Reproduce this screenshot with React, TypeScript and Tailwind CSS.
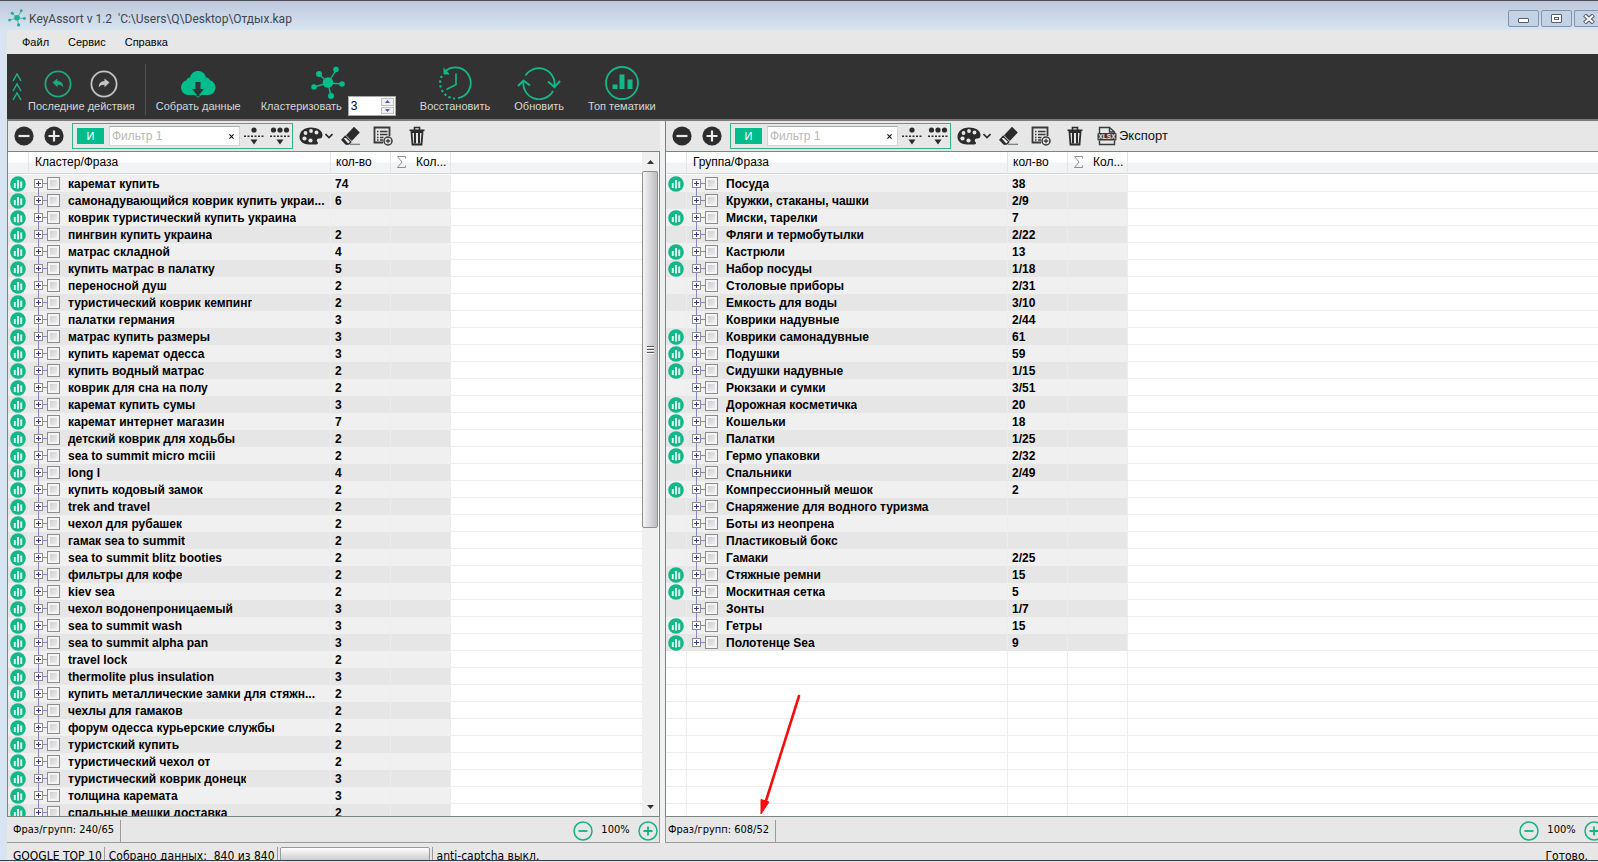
import { useState } from "react";
import type { ReactNode } from "react";
import { clsx } from "clsx";

type Row = { name: string; count: string; chart: boolean };

const clusters: Row[] = [
	["каремат купить", "74"],
	["самонадувающийся коврик купить украи...", "6"],
	["коврик туристический купить украина", ""],
	["пингвин купить украина", "2"],
	["матрас складной", "4"],
	["купить матрас в палатку", "5"],
	["переносной душ", "2"],
	["туристический коврик кемпинг", "2"],
	["палатки германия", "3"],
	["матрас купить размеры", "3"],
	["купить каремат одесса", "3"],
	["купить водный матрас", "2"],
	["коврик для сна на полу", "2"],
	["каремат купить сумы", "3"],
	["каремат интернет магазин", "7"],
	["детский коврик для ходьбы", "2"],
	["sea to summit micro mciii", "2"],
	["long l", "4"],
	["купить кодовый замок", "2"],
	["trek and travel", "2"],
	["чехол для рубашек", "2"],
	["гамак sea to summit", "2"],
	["sea to summit blitz booties", "2"],
	["фильтры для кофе", "2"],
	["kiev sea", "2"],
	["чехол водонепроницаемый", "3"],
	["sea to summit wash", "3"],
	["sea to summit alpha pan", "3"],
	["travel lock", "2"],
	["thermolite plus insulation", "3"],
	["купить металлические замки для стяжн...", "2"],
	["чехлы для гамаков", "2"],
	["форум одесса курьерские службы", "2"],
	["туристский купить", "2"],
	["туристический чехол от", "2"],
	["туристический коврик донецк", "3"],
	["толщина каремата", "3"],
	["спальные мешки доставка", "2"],
].map(([name, count]) => ({ name, count, chart: true }));

const groups: Row[] = [
	{ name: "Посуда", count: "38", chart: true },
	{ name: "Кружки, стаканы, чашки", count: "2/9", chart: false },
	{ name: "Миски, тарелки", count: "7", chart: true },
	{ name: "Фляги и термобутылки", count: "2/22", chart: false },
	{ name: "Кастрюли", count: "13", chart: true },
	{ name: "Набор посуды", count: "1/18", chart: true },
	{ name: "Столовые приборы", count: "2/31", chart: false },
	{ name: "Емкость для воды", count: "3/10", chart: false },
	{ name: "Коврики надувные", count: "2/44", chart: false },
	{ name: "Коврики самонадувные", count: "61", chart: true },
	{ name: "Подушки", count: "59", chart: true },
	{ name: "Сидушки надувные", count: "1/15", chart: true },
	{ name: "Рюкзаки и сумки", count: "3/51", chart: false },
	{ name: "Дорожная косметичка", count: "20", chart: true },
	{ name: "Кошельки", count: "18", chart: true },
	{ name: "Палатки", count: "1/25", chart: true },
	{ name: "Гермо упаковки", count: "2/32", chart: true },
	{ name: "Спальники", count: "2/49", chart: false },
	{ name: "Компрессионный мешок", count: "2", chart: true },
	{ name: "Снаряжение для водного туризма", count: "", chart: false },
	{ name: "Боты из неопрена", count: "", chart: false },
	{ name: "Пластиковый бокс", count: "", chart: false },
	{ name: "Гамаки", count: "2/25", chart: false },
	{ name: "Стяжные ремни", count: "15", chart: true },
	{ name: "Москитная сетка", count: "5", chart: true },
	{ name: "Зонты", count: "1/7", chart: false },
	{ name: "Гетры", count: "15", chart: true },
	{ name: "Полотенце Sea", count: "9", chart: true },
];

const emptyRows = Array.from({ length: 10 }, (_, i) => i);

function ClusterIcon({ className }: { className?: string }) {
	return (
		<svg viewBox="0 0 34 34" className={className} fill="currentColor" stroke="currentColor">
			<path d="M17 17 8 8M17 17l8-13M17 17l14 1M17 17 3 21M17 17l3 13" strokeWidth="1.4" />
			<g stroke="none">
				<circle cx="17" cy="16.500" r="5.300" />
				<circle cx="8" cy="8" r="3" />
				<circle cx="25" cy="3.500" r="2.800" />
				<circle cx="31" cy="18" r="2.800" />
				<circle cx="3" cy="21" r="2.800" />
				<circle cx="20" cy="30" r="3" />
			</g>
		</svg>
	);
}

function ArrowCircle({ flip }: { flip?: boolean }) {
	return (
		<svg viewBox="0 0 28 28" className="size-7" fill="none" stroke="currentColor">
			<circle cx="14" cy="14" r="12.600" strokeWidth="1.800" />
			<path
				d="M8.500 12.500 13.500 8.500v2.600c3.700.2 5.600 2.400 5.800 6.200-1.400-1.900-3-2.600-5.800-2.600v2.600z"
				fill="currentColor"
				stroke="none"
				transform={flip ? "matrix(-1 0 0 1 28 0)" : undefined}
			/>
		</svg>
	);
}

function CloudIcon() {
	return (
		<svg viewBox="0 0 36 28" className="h-7 w-9">
			<path
				d="M8 25a7.500 7.500 0 0 1-1.500-14.700C7 8.500 8.500 7.600 10 7.600 11 3.400 14 1 18 1s7 2.400 8 6.400c2 0 3.400 1 4 2.900A7.500 7.500 0 0 1 28.500 25z"
				fill="#00bd8b"
			/>
			<path d="M15.500 12h5v7h3.300L18 26.500 12.200 19h3.300z" fill="#323232" />
			<path d="M13.500 23.500 18 27.300l4.500-3.800" fill="none" stroke="#00bd8b" strokeWidth="1" />
		</svg>
	);
}

function RestoreIcon() {
	return (
		<svg viewBox="0 0 34 34" className="size-[34px]" fill="none" stroke="currentColor" strokeWidth="1.800">
			<path d="M8 4.500A15.500 15.500 0 1 1 20 32.200" />
			<path d="M3.800 10A15.500 15.500 0 0 0 17 32.500" strokeDasharray="2.200 2.600" strokeWidth="2.200" />
			<path d="M6 2.500v5.500h5z" fill="currentColor" strokeWidth="1" />
			<path d="M18 7.500v11L8.500 23.500" strokeWidth="1.600" />
		</svg>
	);
}

function RefreshIcon() {
	return (
		<svg viewBox="0 0 44 34" className="h-[34px] w-11" fill="none" stroke="currentColor" strokeWidth="1.800">
			<path d="M8.500 9.500A15.800 15.800 0 0 1 37.500 20" />
			<path d="M36 25A15.800 15.800 0 0 1 6.500 15" />
			<path d="m1 20 5.500-5.500L13 19.500M31 15.500l6.500 5.500L43 15" strokeWidth="2" />
		</svg>
	);
}

function TopIcon() {
	return (
		<svg viewBox="0 0 34 34" className="size-[34px]" fill="currentColor">
			<circle cx="17" cy="17" r="16" fill="none" stroke="currentColor" strokeWidth="1.800" />
			<path d="M7.500 18.500h5V23h-5zM14.500 8.500h5V23h-5zM22.500 13.500h5V23h-5z" />
		</svg>
	);
}

function ChartBadge() {
	return (
		<svg viewBox="0 0 16 16" className="block size-4">
			<circle cx="8" cy="8" r="7.800" fill="#14b78a" />
			<path d="M3.800 7h2v5h-2zM7 4h2v8.500H7zM10.200 5.500h2V12h-2z" fill="#d9f5ec" />
		</svg>
	);
}

function RoundSign({ plus }: { plus?: boolean }) {
	return (
		<svg viewBox="0 0 20 20" className="size-5">
			<circle cx="10" cy="10" r="9.600" fill="#2d2d2d" />
			<path d={plus ? "M4.500 10h11M10 4.500v11" : "M4.500 10h11"} stroke="#e9e9e9" strokeWidth="2.200" />
		</svg>
	);
}

function ZoomSign({ plus }: { plus?: boolean }) {
	return (
		<svg viewBox="0 0 20 20" className="size-5" fill="none" stroke="#12b486">
			<circle cx="10" cy="10" r="9" strokeWidth="1.500" />
			<path d={plus ? "M5.500 10h9M10 5.500v9" : "M5.500 10h9"} strokeWidth="1.800" />
		</svg>
	);
}

function CollapseDots({ many }: { many?: boolean }) {
	return (
		<svg viewBox="0 0 20 20" className="size-5" fill="#2b2b2b">
			<circle cx="10" cy="4" r="2.600" />
			{many && <circle cx="3.500" cy="4" r="2.600" />}
			{many && <circle cx="16.500" cy="4" r="2.600" />}
			<path d="M0 9.500h2v1.500H0zM3.500 9.500h2v1.500h-2zM7 9.500h2v1.500H7zM10.500 9.500h2v1.500h-2zM14 9.500h2v1.500h-2zM17.500 9.500h2v1.500h-2zM6.500 13.500h7L10 18.500z" />
		</svg>
	);
}

function Palette() {
	return (
		<svg viewBox="0 0 24 20" className="h-5 w-6">
			<path
				d="M12 1.500C5 1.500.5 5.500.5 11c0 4.500 4 7.500 9.500 7.500h7c2 0 2.500-1.500 1.500-2.500-1.500-1.500-.5-3.500 1.500-3.500 2 .3 3.500-.7 3.500-3.500 0-4.500-5-7.500-11.500-7.500z"
				fill="#2b2b2b"
			/>
			<g fill="#e8e8e8">
				<circle cx="5.500" cy="12.500" r="2.100" />
				<circle cx="6.500" cy="7" r="1.900" />
				<circle cx="12" cy="5" r="1.900" />
				<circle cx="17.500" cy="6.500" r="1.900" />
				<circle cx="11.500" cy="14.500" r="2.100" />
			</g>
		</svg>
	);
}

function Eraser() {
	return (
		<svg viewBox="0 0 20 20" className="size-5">
			<path d="m13 .8 5.800 5.700-8 8.500L5 9.200z" fill="#2b2b2b" />
			<path d="m4.200 10.200 5.600 5.700-2 2.100H5L1 14z" fill="#e8e8e8" stroke="#2b2b2b" strokeWidth="1.300" />
			<path d="M.5 13.500 5 18.500l2.500-.5-5-6z" fill="#2b2b2b" />
			<path d="M9 18.300h10" stroke="#777" strokeWidth="1.200" />
		</svg>
	);
}

function ListAdd() {
	return (
		<svg viewBox="0 0 20 20" className="size-5" fill="none" stroke="#3a3a3a">
			<path d="M10 16.500H1.500v-15h15V10" strokeWidth="1.800" />
			<path d="M4 5.500h1.500M7 5.500h7.500M4 8.500h1.500M7 8.500h7.500M4 11.500h1.500M7 11.500h3.500M4 14h1.500M7 14h3" strokeWidth="1.300" />
			<circle cx="15" cy="15" r="4" strokeWidth="1.500" fill="#e8e8e8" />
			<path d="M12.800 15h4.400M15 12.800v4.400" strokeWidth="1.300" />
		</svg>
	);
}

function Trash() {
	return (
		<svg viewBox="0 0 16 20" className="h-5 w-4" fill="none" stroke="#2b2b2b">
			<path d="M.5 4.200h15M5.500 3.500V1.500h5v2" strokeWidth="1.600" />
			<path d="M2.500 6 3.500 18.500h9L13.500 6z" strokeWidth="1.800" />
			<path d="M6 6.500v11M10 6.500v11" strokeWidth="2" />
		</svg>
	);
}

function Xlsx() {
	return (
		<svg viewBox="0 0 20 20" className="size-5" fill="none" stroke="#3a3a3a">
			<path d="M2.500 7V1.500h10l5 4.500v2M12.500 1.500V6h5M2.500 14.500v4h15v-4" strokeWidth="1.400" />
			<rect x=".5" y="7" width="19" height="7.500" rx="1" fill="#3a3a3a" stroke="none" />
			<text x="10" y="13" textAnchor="middle" fontSize="6.500" fontWeight="700" fontFamily="Liberation Sans" fill="#e8e8e8" stroke="none">
				XLSX
			</text>
		</svg>
	);
}

function IconButton({ label, className, children }: { label: string; className?: string; children: ReactNode }) {
	return (
		<button type="button" aria-label={label} className={clsx("flex shrink-0 items-center", className)}>
			{children}
		</button>
	);
}

function Action({ icon, label }: { icon: ReactNode; label: string }) {
	return (
		<button type="button" className="flex flex-col items-center justify-end">
			<span className="text-[#14b78a]">{icon}</span>
			<span className="leading-3">{label}</span>
		</button>
	);
}

function TitleBar() {
	return (
		<header className="flex h-[30px] shrink-0 items-start border-t border-[#4c4a58] bg-linear-to-b from-[#bdc9db] to-[#d7e4f1]">
			<ClusterIcon className="mt-2 ml-2 size-[18px] text-[#27ad90]" />
			<h1 className="mt-2 ml-[3px] font-[Roboto,sans-serif] text-xs leading-5 whitespace-pre text-[#3f4650]">
				{"KeyAssort v 1.2  'C:\\Users\\Q\\Desktop\\Отдых.kap"}
			</h1>
			<div className="mt-[9px] ml-auto flex gap-0.5">
				<button type="button" aria-label="Свернуть" className="flex h-[17px] w-[31px] items-center justify-center rounded-xs border border-[#8393ad] bg-[#c4d2e5]">
					<span className="mt-[3px] h-[5px] w-[11px] rounded-[1px] border border-[#555c6b] bg-white" />
				</button>
				<button type="button" aria-label="Развернуть" className="flex h-[17px] w-[31px] items-center justify-center rounded-xs border border-[#8393ad] bg-[#c4d2e5]">
					<span className="flex h-[9px] w-[11px] items-center justify-center rounded-[1px] border border-[#555c6b] bg-white">
						<span className="h-[3px] w-[5px] border border-[#555c6b]" />
					</span>
				</button>
				<button type="button" aria-label="Закрыть" className="flex h-[17px] w-6 items-center justify-end rounded-l-xs border border-r-0 border-[#8393ad] bg-[#c4d2e5] pr-[3px]">
					<svg viewBox="0 0 12 10" className="h-2.5 w-3">
						<path d="m1.500 1 9 8M10.500 1l-9 8" stroke="#555c6b" strokeWidth="4.200" />
						<path d="m2 1.500 8 7M10 1.500l-8 7" stroke="#fff" strokeWidth="2" />
					</svg>
				</button>
			</div>
		</header>
	);
}

function MainToolbar() {
	const [size, setSize] = useState(3);
	return (
		<div className="flex h-[65px] shrink-0 bg-[#323232] pb-[7px] text-[11px] text-[#d6d6d6]">
			<button type="button" aria-label="Скрыть панель" className="ml-[5px] flex w-3 items-center pt-2">
				<svg viewBox="0 0 10 28" className="h-7 w-2.5" fill="none" stroke="#14b78a" strokeWidth="1.500">
					<path d="m1 8 4-7 4 7M1 18l4-7 4 7M1 27l4-7 4 7" />
				</svg>
			</button>
			<div className="ml-1 flex flex-col items-center justify-end">
				<div className="mb-0.5 flex gap-[18px]">
					<button type="button" aria-label="Отменить" className="text-[#22a782]">
						<ArrowCircle />
					</button>
					<button type="button" aria-label="Повторить" className="text-[#c4c4c4]">
						<ArrowCircle flip />
					</button>
				</div>
				<span className="leading-3">Последние действия</span>
			</div>
			<span className="mt-2.5 ml-2.5 h-[51px] w-px bg-[#505050]" />
			<div className="ml-2.5 flex">
				<Action icon={<div className="mb-0.5"><CloudIcon /></div>} label="Собрать данные" />
			</div>
			<div className="-mb-1 ml-5 flex flex-col items-center justify-end">
				<button type="button" aria-label="Кластеризовать" className="-mb-1 text-[#00bd8b]">
					<ClusterIcon className="size-[34px]" />
				</button>
				<div className="flex h-5 items-center gap-1.5">
					<label htmlFor="cluster-size">Кластеризовать</label>
					<div className="flex h-5 w-12 border border-[#a9a9a9] bg-white">
						<input
							id="cluster-size"
							type="number"
							value={size}
							onChange={(e) => setSize(Number(e.target.value))}
							className="w-8 min-w-0 flex-1 appearance-none bg-white pl-0.5 text-xs text-black outline-none [appearance:textfield] [&::-webkit-inner-spin-button]:appearance-none"
						/>
						<div className="flex w-3.5 flex-col gap-px py-px pr-px">
							<button type="button" aria-label="Больше" onClick={() => setSize(size + 1)} className="flex flex-1 items-center justify-center border border-[#c0c0c0] bg-[#f0f0f0]">
								<svg viewBox="0 0 5 3" className="h-[3px] w-[5px]"><path d="M0 3h5L2.500 0z" fill="#4a5a9a" /></svg>
							</button>
							<button type="button" aria-label="Меньше" onClick={() => setSize(size - 1)} className="flex flex-1 items-center justify-center border border-[#c0c0c0] bg-[#f0f0f0]">
								<svg viewBox="0 0 5 3" className="h-[3px] w-[5px]"><path d="M0 0h5L2.500 3z" fill="#4a5a9a" /></svg>
							</button>
						</div>
					</div>
				</div>
			</div>
			<div className="ml-6 flex gap-6">
				<Action icon={<RestoreIcon />} label="Восстановить" />
				<Action icon={<RefreshIcon />} label="Обновить" />
				<Action icon={<TopIcon />} label="Топ тематики" />
			</div>
		</div>
	);
}

function PanelToolbar({ id, withExport }: { id: string; withExport?: boolean }) {
	const [filter, setFilter] = useState("");
	return (
		<div className="flex h-[30px] shrink-0 items-center border-l border-[#7d7d7d] bg-[#e7e7e7] pl-1.5">
			<IconButton label="Свернуть все"><RoundSign /></IconButton>
			<IconButton label="Развернуть все" className="ml-2.5"><RoundSign plus /></IconButton>
			<div className="ml-2 flex h-[26px] shrink-0 items-center border border-[#35b28c] pr-0.5 pl-1">
				<button type="button" className="h-4 w-[27px] bg-[#00bd8b] text-[11px] leading-4 text-white">И</button>
				<div className="ml-[5px] flex h-5 w-[131px] items-center border border-[#d5d5d5] border-t-[#aaaaaa] bg-white">
					<label htmlFor={id} className="sr-only">Фильтр 1</label>
					<input
						id={id}
						value={filter}
						onChange={(e) => setFilter(e.target.value)}
						placeholder="Фильтр 1"
						className="h-full min-w-0 flex-1 bg-transparent pl-0.5 text-xs leading-4 text-black outline-none placeholder:text-[#b8b8b8]"
					/>
					<button type="button" aria-label="Очистить" onClick={() => setFilter("")} className="w-4 text-center">
						<svg viewBox="0 0 6 6" className="mx-auto size-[5px]" stroke="#111" strokeWidth="1.300"><path d="m.5.500 5 5M5.500.500l-5 5" /></svg>
					</button>
				</div>
				<IconButton label="Свернуть уровень" className="ml-1"><CollapseDots /></IconButton>
				<IconButton label="Свернуть уровни" className="ml-1.5"><CollapseDots many /></IconButton>
			</div>
			<IconButton label="Цвет" className="ml-1.5 gap-0.5">
				<Palette />
				<svg viewBox="0 0 8 6" className="h-1.5 w-2" fill="none" stroke="#2b2b2b" strokeWidth="1.600"><path d="m.5 1 3.500 3.500L7.500 1" /></svg>
			</IconButton>
			<IconButton label="Очистить выделение" className="ml-2"><Eraser /></IconButton>
			<IconButton label="Добавить список" className="ml-3"><ListAdd /></IconButton>
			<IconButton label="Удалить" className="ml-4"><Trash /></IconButton>
			{withExport && (
				<button type="button" className="ml-3.5 flex items-center gap-0.5 text-[13px] text-[#111]">
					<Xlsx />
					Экспорт
				</button>
			)}
		</div>
	);
}

const headCell = "h-[22px] border-r border-b border-r-[#e3e5e8] border-b-[#d2d5da] bg-linear-to-b from-white from-45% to-[#f1f3f5] to-55% p-0 pb-0.5 text-left font-normal";

function KeyTable({ title, rows, wide }: { title: string; rows: Row[]; wide?: boolean }) {
	return (
		<table className="w-full table-fixed border-separate border-spacing-0 text-xs text-black">
			<colgroup>
				<col className="w-[21px]" />
				<col className={wide ? "w-[321px]" : "w-[302px]"} />
				<col className="w-[60px]" />
				<col className="w-[60px]" />
				<col />
			</colgroup>
			<thead>
				<tr>
					<th className={headCell} />
					<th className={clsx(headCell, "pl-1.5")}>{title}</th>
					<th className={clsx(headCell, "pl-[5px]")}>кол-во</th>
					<th className={clsx(headCell, "pl-1.5")}>
						<span className="flex items-center gap-2.5">
							<svg viewBox="0 0 9 12" className="h-3 w-[9px]" fill="none" stroke="#8f8f8f"><path d="M8.500 2.500v-2h-8L5 6 .5 11.500h8v-2" /></svg>
							Кол...
						</span>
					</th>
					<th className={clsx(headCell, "border-r-0")} />
				</tr>
				<tr><td colSpan={5} className="h-px p-0" /></tr>
			</thead>
			<tbody>
				{rows.map((row) => (
					<tr key={row.name} className="group h-[17px] font-bold odd:bg-[#f0f0f0] even:bg-[#e6e6e6]">
						<td className="border-r border-[#ededed] p-0 pl-0.5">{row.chart && <ChartBadge />}</td>
						<td className="border-r border-[#ededed] p-0">
							<div className="flex h-[17px] items-center">
								<span className="ml-[5px] flex h-full w-[9px] flex-col items-center">
									<span className="w-px flex-1 bg-[#8a86c4] group-first:invisible" />
									<svg viewBox="0 0 9 9" className="size-[9px]" fill="none">
										<rect x=".5" y=".5" width="8" height="8" fill="#fafafa" stroke="#8c8c8c" />
										<path d="M2 4.500h5M4.500 2v5" stroke="#34408a" />
									</svg>
									<span className="w-px flex-1 bg-[#8a86c4] group-last:invisible" />
								</span>
								<span className="h-px w-1 bg-[#8a86c4]" />
								<input
									type="checkbox"
									aria-label={row.name}
									className="size-[13px] shrink-0 appearance-none border border-[#8c8c8c] bg-linear-to-br from-[#c4c6cc] to-[#f6f6f6] inset-ring-2 inset-ring-[#f4f4f4] checked:from-[#14b78a]"
								/>
								<span className="ml-2 truncate pt-px leading-4">{row.name}</span>
							</div>
						</td>
						<td className="border-r border-[#ededed] p-0 pt-px pl-1 leading-4">{row.count}</td>
						<td className="border-r border-[#ededed] p-0" />
						<td className="border-b border-[#ededed] bg-white p-0" />
					</tr>
				))}
			</tbody>
			{wide && (
				<tbody>
					{emptyRows.map((i) => (
						<tr key={i} className="h-[17px]">
							<td className="border-r border-b border-[#ededed] p-0" />
							<td className="border-r border-b border-[#ededed] p-0" />
							<td className="border-r border-b border-[#ededed] p-0" />
							<td className="border-r border-b border-[#ededed] p-0" />
							<td className="border-b border-[#ededed] p-0" />
						</tr>
					))}
				</tbody>
			)}
		</table>
	);
}

function Scrollbar() {
	return (
		<div className="flex w-4 shrink-0 flex-col bg-[#f0f0f0]">
			<button type="button" aria-label="Вверх" className="flex h-[19px] items-center justify-center">
				<svg viewBox="0 0 7 4" className="h-1 w-[7px]"><path d="M0 4h7L3.500 0z" fill="#333" /></svg>
			</button>
			<div className="flex flex-1 flex-col">
				<div className="flex h-[57%] flex-col items-center justify-center gap-px rounded-xs border border-[#909090] bg-linear-to-r from-[#f5f5f5] to-[#bdbdc2]">
					<span className="h-0.5 w-[7px] border-t border-[#555] bg-white" />
					<span className="h-0.5 w-[7px] border-t border-[#555] bg-white" />
					<span className="h-0.5 w-[7px] border-t border-[#555] bg-white" />
				</div>
			</div>
			<button type="button" aria-label="Вниз" className="flex h-[18px] items-center justify-center">
				<svg viewBox="0 0 7 4" className="h-1 w-[7px]"><path d="M0 0h7L3.500 4z" fill="#333" /></svg>
			</button>
		</div>
	);
}

function PanelFooter({ total, className }: { total: string; className: string }) {
	return (
		<div className={clsx("flex h-[27px] shrink-0 items-center border-t border-b border-t-[#7d8484] border-b-[#9a9a9a] pt-0.5 font-['DejaVu_Sans_Condensed','DejaVu_Sans',sans-serif] text-[11px]", className)}>
			<span className="flex h-[22px] items-center border-r border-[#9a9a9a] pr-1.5">Фраз/групп: {total}</span>
			<IconButton label="Уменьшить" className="ml-auto"><ZoomSign /></IconButton>
			<span className="w-[45px] text-center">100%</span>
			<IconButton label="Увеличить"><ZoomSign plus /></IconButton>
		</div>
	);
}

export default function App() {
	return (
		<div className="relative flex h-screen flex-col overflow-hidden bg-[#d7e4f1] font-['Liberation_Sans',Arial,sans-serif] text-black">
			<TitleBar />
			<div className="ml-[7px] flex min-h-0 flex-1 flex-col bg-[#e7e7e7]">
				<nav className="flex h-6 shrink-0 items-center gap-[19px] pl-[15px] text-[11px]">
					<button type="button">Файл</button>
					<button type="button">Сервис</button>
					<button type="button">Справка</button>
				</nav>
				<MainToolbar />
				<main className="grid min-h-0 flex-1 grid-cols-[653fr_5fr_933fr] border-t-2 border-[#7b7b7b]">
					<section className="flex min-h-0 min-w-0 flex-col">
						<PanelToolbar id="filter-clusters" />
						<div className="flex min-h-0 flex-1 border-x border-t border-[#7d8484] bg-white pr-px">
							<div className="min-w-0 flex-1 overflow-hidden">
								<KeyTable title="Кластер/Фраза" rows={clusters} />
							</div>
							<Scrollbar />
						</div>
						<PanelFooter total="240/65" className="border-r border-r-[#9a9a9a] pr-px pl-1.5" />
					</section>
					<div className="bg-[#f0f0f0]" />
					<section className="flex min-h-0 min-w-0 flex-col">
						<PanelToolbar id="filter-groups" withExport />
						<div className="min-h-0 flex-1 overflow-hidden border-t border-l border-[#7d8484] bg-white">
							<KeyTable title="Группа/Фраза" rows={groups} wide />
						</div>
						<div className="flex flex-col overflow-hidden">
							<PanelFooter total="608/52" className="-mr-1.5 border-l border-l-[#9a9a9a] pl-0.5" />
						</div>
					</section>
				</main>
				<footer className="flex h-[17px] shrink-0 items-start overflow-hidden font-['DejaVu_Sans_Condensed','DejaVu_Sans',sans-serif] text-xs">
					<span className="mt-1 border-r border-[#9a9a9a] pr-0.5 pl-1.5 leading-[18px]">GOOGLE TOP 10</span>
					<span className="mt-1 border-r border-[#9a9a9a] pr-0.5 pl-1 leading-[18px] whitespace-pre">{"Собрано данных:  840 из 840"}</span>
					<span className="mt-1 ml-0.5 h-5 w-[150px] rounded-xs border border-[#9a9a9a] bg-linear-to-b from-white to-[#b5b5b5]" />
					<span className="mt-1 ml-0.5 border-l border-[#9a9a9a] pl-1 leading-[18px]">anti-captcha выкл.</span>
					<span className="mt-1 mr-2.5 ml-auto leading-[18px]">Готово.</span>
				</footer>
			</div>
			<div className="h-0.5 shrink-0 border-t border-[#2f3f50] bg-[#dfe5ea]" />
			{/* pointer to the group counter */}
			<svg viewBox="0 0 44 124" className="pointer-events-none absolute top-[694px] left-[758px] h-[124px] w-11">
				<path d="M41 2 7 110" stroke="#f80d0d" strokeWidth="2.600" strokeLinecap="round" />
				<path d="M3 120V105.500l8 2.500z" fill="#f80d0d" stroke="#f80d0d" />
			</svg>
		</div>
	);
}
